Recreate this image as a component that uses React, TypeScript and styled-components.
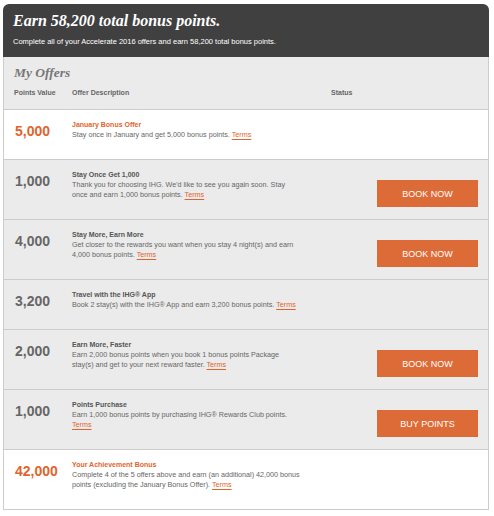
import React from "react";
import styled, { createGlobalStyle } from "styled-components";

const GlobalStyle = createGlobalStyle`
  html, body { margin: 0; padding: 0; background: #ffffff; }
  body { font-family: "Liberation Sans", Arial, sans-serif; }
`;

const Wrapper = styled.div`
  padding: 4px 5px 0 3px;
  width: 486px;
`;

const Header = styled.div`
  background: #404040;
  border-radius: 6px 6px 0 0;
  padding: 7px 10px 10px;
`;

const Title = styled.h1`
  margin: 0;
  font-family: "Liberation Serif", Georgia, serif;
  font-style: italic;
  font-weight: bold;
  font-size: 16px;
  line-height: 20px;
  color: #ffffff;
`;

const Subtitle = styled.p`
  margin: 6px 0 0;
  font-size: 7.5px;
  line-height: 10px;
  color: #ffffff;
`;

const Offers = styled.div`
  border: 1px solid #cccccc;
  border-top: none;
`;

const SectionHead = styled.div`
  background: #ebebeb;
  padding: 8px 10px 11px;
`;

const SectionTitle = styled.h2`
  margin: 0;
  font-family: "Liberation Serif", Georgia, serif;
  font-style: italic;
  font-weight: bold;
  font-size: 13.5px;
  line-height: 16px;
  color: #777777;
`;

const Labels = styled.div`
  margin-top: 7px;
  display: grid;
  grid-template-columns: 58px 259px 1fr;
  font-size: 7px;
  line-height: 10px;
  font-weight: bold;
  color: #666666;
`;

const Row = styled.div<{ $highlight?: boolean }>`
  display: grid;
  grid-template-columns: 58px 230px 1fr 101px;
  align-items: start;
  border-top: 1px solid #cccccc;
  padding: 10px 10px 12px;
  background: ${(p) => (p.$highlight ? "#ffffff" : "#ebebeb")};
`;

const Points = styled.div<{ $highlight?: boolean }>`
  margin-top: 3px;
  padding-left: 1px;
  font-size: 14px;
  line-height: 16px;
  font-weight: bold;
  color: ${(p) => (p.$highlight ? "#e0642c" : "#666666")};
`;

const Desc = styled.div`
  padding-bottom: 7px;
  font-size: 7.2px;
  line-height: 10px;
  color: #666666;
`;

const OfferName = styled.div<{ $highlight?: boolean }>`
  font-size: 7px;
  font-weight: bold;
  color: ${(p) => (p.$highlight ? "#e0642c" : "#555555")};
`;

const Terms = styled.a`
  color: #e0642c;
  text-decoration: underline;
  text-underline-offset: 2px;
  cursor: pointer;
`;

const ActionButton = styled.button`
  grid-column: 4;
  margin-top: 10px;
  height: 27px;
  width: 101px;
  border: none;
  padding: 0;
  background: #dd6b37;
  color: #ffffff;
  font-family: "Liberation Sans", Arial, sans-serif;
  font-size: 9px;
  cursor: pointer;
`;

type Offer = {
  points: string;
  name: string;
  text: string;
  highlight?: boolean;
  action?: string;
  breakBeforeTerms?: boolean;
};

const offers: Offer[] = [
  {
    points: "5,000",
    name: "January Bonus Offer",
    text: "Stay once in January and get 5,000 bonus points.",
    highlight: true,
  },
  {
    points: "1,000",
    name: "Stay Once Get 1,000",
    text: "Thank you for choosing IHG. We'd like to see you again soon. Stay once and earn 1,000 bonus points.",
    action: "BOOK NOW",
  },
  {
    points: "4,000",
    name: "Stay More, Earn More",
    text: "Get closer to the rewards you want when you stay 4 night(s) and earn 4,000 bonus points.",
    action: "BOOK NOW",
  },
  {
    points: "3,200",
    name: "Travel with the IHG\u00AE App",
    text: "Book 2 stay(s) with the IHG\u00AE App and earn 3,200 bonus points.",
  },
  {
    points: "2,000",
    name: "Earn More, Faster",
    text: "Earn 2,000 bonus points when you book 1 bonus points Package stay(s) and get to your next reward faster.",
    action: "BOOK NOW",
  },
  {
    points: "1,000",
    name: "Points Purchase",
    text: "Earn 1,000 bonus points by purchasing IHG\u00AE Rewards Club points.",
    action: "BUY POINTS",
    breakBeforeTerms: true,
  },
  {
    points: "42,000",
    name: "Your Achievement Bonus",
    text: "Complete 4 of the 5 offers above and earn (an additional) 42,000 bonus points (excluding the January Bonus Offer).",
    highlight: true,
  },
];

export default function App() {
  return (
    <>
      <GlobalStyle />
      <Wrapper>
        <Header>
          <Title>Earn 58,200 total bonus points.</Title>
          <Subtitle>
            Complete all of your Accelerate 2016 offers and earn 58,200 total bonus points.
          </Subtitle>
        </Header>
        <Offers>
          <SectionHead>
            <SectionTitle>My Offers</SectionTitle>
            <Labels>
              <span>Points Value</span>
              <span>Offer Description</span>
              <span>Status</span>
            </Labels>
          </SectionHead>
          {offers.map((o, i) => (
            <Row key={i} $highlight={o.highlight}>
              <Points $highlight={o.highlight}>{o.points}</Points>
              <Desc>
                <OfferName $highlight={o.highlight}>{o.name}</OfferName>
                {o.text} {o.breakBeforeTerms && <br />}
                <Terms>Terms</Terms>
              </Desc>
              {o.action && <ActionButton>{o.action}</ActionButton>}
            </Row>
          ))}
        </Offers>
      </Wrapper>
    </>
  );
}
